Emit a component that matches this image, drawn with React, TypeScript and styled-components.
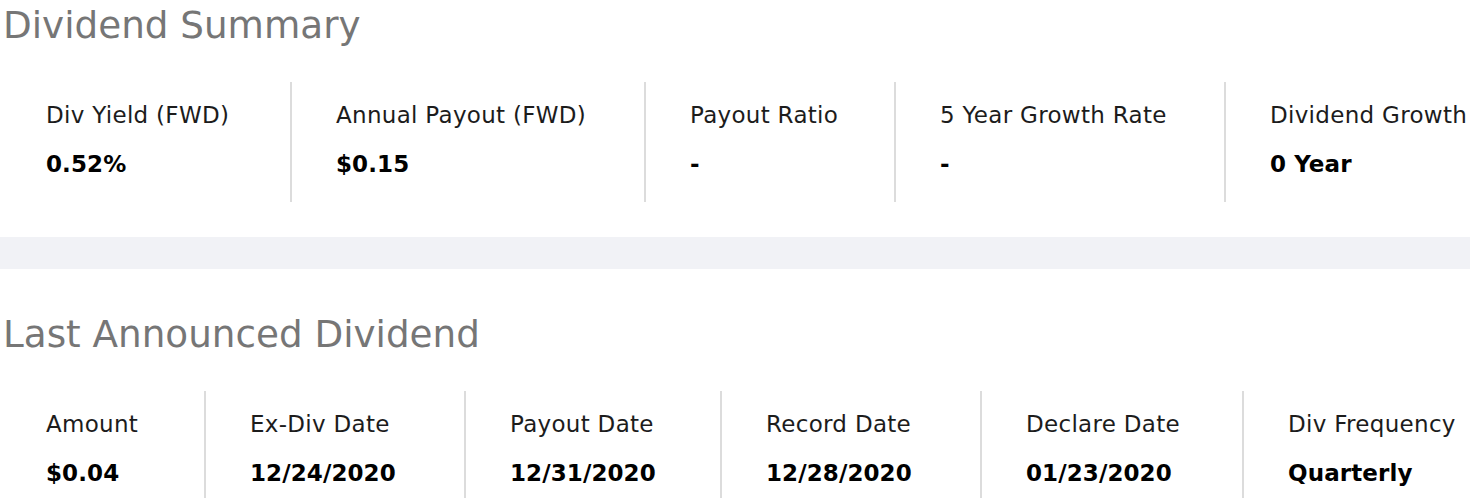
import React from "react";
import styled, { createGlobalStyle } from "styled-components";

const GlobalStyle = createGlobalStyle`
  html, body {
    margin: 0;
    padding: 0;
    background: #ffffff;
  }
  body {
    font-family: "DejaVu Sans", "Liberation Sans", Arial, sans-serif;
    -webkit-font-smoothing: antialiased;
  }
`;

const Page = styled.div`
  width: 1470px;
  height: 498px;
  overflow: hidden;
  background: #ffffff;
  display: flex;
  flex-direction: column;
`;

const Section = styled.section<{ $top: number }>`
  display: flex;
  flex-direction: column;
  padding-top: ${(p) => p.$top}px;
`;

const Title = styled.h2`
  margin: 0 0 35px 0;
  padding-left: 3px;
  font-family: "DejaVu Sans", "Liberation Sans", sans-serif;
  font-size: 37.3px;
  line-height: 44px;
  font-weight: 400;
  color: #767676;
  white-space: nowrap;
`;

const MetricRow = styled.div<{ $cols: string }>`
  display: grid;
  grid-template-columns: ${(p) => p.$cols};
  padding-left: 2px;
`;

const Metric = styled.div`
  display: flex;
  flex-direction: column;
  gap: 23px;
  padding: 20px 0 25px 44px;
  box-sizing: border-box;
  min-width: 0;
  & + & {
    border-left: 2px solid #dcdcdc;
  }
`;

const Label = styled.div`
  font-size: 23px;
  line-height: 26px;
  letter-spacing: 0.3px;
  color: #1c1c1c;
  white-space: nowrap;
`;

const Value = styled.div`
  font-size: 23px;
  line-height: 26px;
  font-weight: 700;
  letter-spacing: 0.1px;
  color: #000000;
  white-space: nowrap;
`;

const Band = styled.div`
  margin-top: 35px;
  height: 32px;
  background: #f1f2f6;
  flex-shrink: 0;
`;

type Item = { label: string; value: string };

const summary: Item[] = [
  { label: "Div Yield (FWD)", value: "0.52%" },
  { label: "Annual Payout (FWD)", value: "$0.15" },
  { label: "Payout Ratio", value: "-" },
  { label: "5 Year Growth Rate", value: "-" },
  { label: "Dividend Growth", value: "0 Year" },
];

const announced: Item[] = [
  { label: "Amount", value: "$0.04" },
  { label: "Ex-Div Date", value: "12/24/2020" },
  { label: "Payout Date", value: "12/31/2020" },
  { label: "Record Date", value: "12/28/2020" },
  { label: "Declare Date", value: "01/23/2020" },
  { label: "Div Frequency", value: "Quarterly" },
];

const Metrics = ({ items, cols }: { items: Item[]; cols: string }) => (
  <MetricRow $cols={cols}>
    {items.map((it) => (
      <Metric key={it.label}>
        <Label>{it.label}</Label>
        <Value>{it.value}</Value>
      </Metric>
    ))}
  </MetricRow>
);

export default function App() {
  return (
    <>
      <GlobalStyle />
      <Page>
        <Section $top={3}>
          <Title>Dividend Summary</Title>
          <Metrics items={summary} cols="288px 354px 250px 330px 1fr" />
        </Section>
        <Band />
        <Section $top={43}>
          <Title>Last Announced Dividend</Title>
          <Metrics
            items={announced}
            cols="202px 260px 256px 260px 262px 1fr"
          />
        </Section>
      </Page>
    </>
  );
}
